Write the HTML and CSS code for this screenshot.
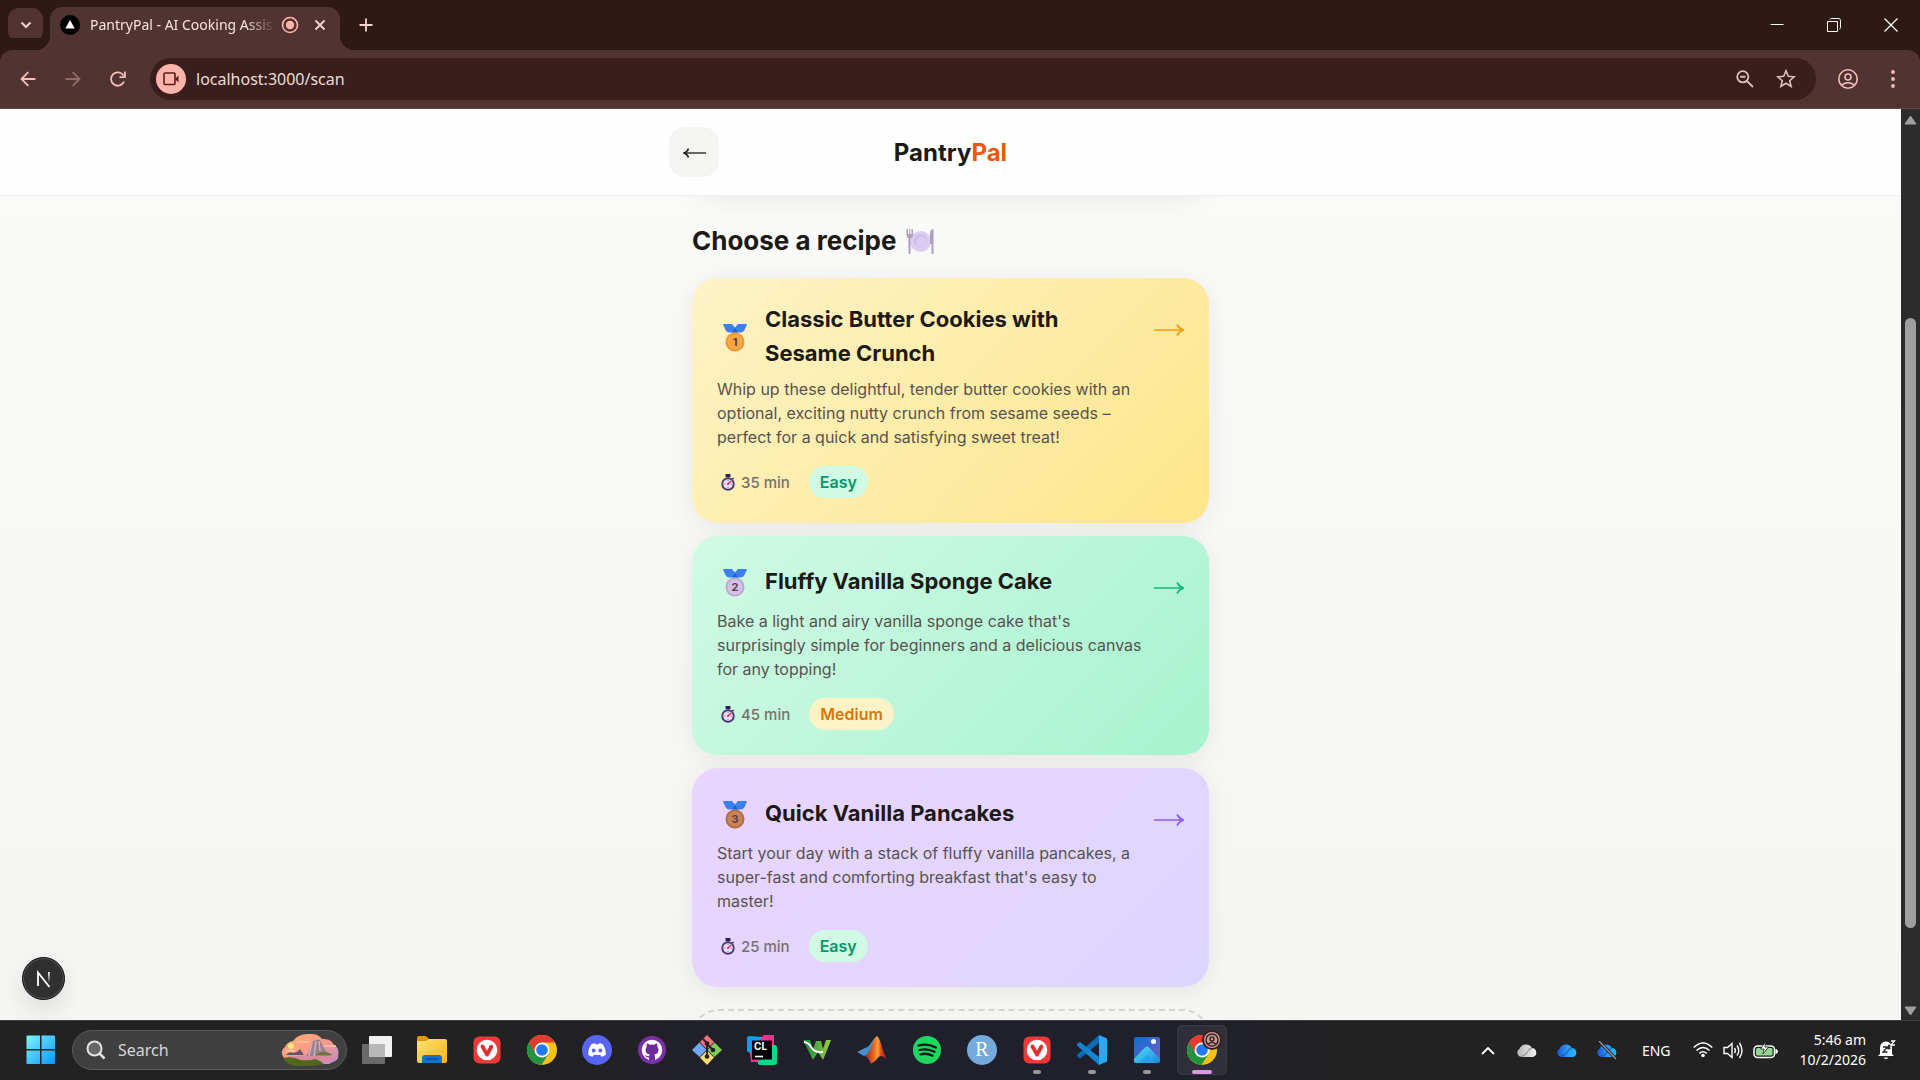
FILE: index.html
```html
<!DOCTYPE html>
<html lang="en">
<head>
    <meta charset="UTF-8">
    <meta name="viewport" content="width=device-width, initial-scale=1.0">
    <title>PantryPal - AI Cooking Assistant</title>
    <link rel="stylesheet" href="styles.css">
</head>
<body>

<!-- Shared icons -->
<svg class="sprite" aria-hidden="true">
    <defs>
        <linearGradient id="win-grad" x1="0" y1="0" x2="1" y2="1"><stop offset="0" stop-color="#7df3fb"/><stop offset="1" stop-color="#0a98ff"/></linearGradient>
        <linearGradient id="folder-grad" x1="0" y1="0" x2="1" y2="1"><stop offset="0" stop-color="#ffe27a"/><stop offset="1" stop-color="#f8b50c"/></linearGradient>
        <linearGradient id="sky-grad" x1="0" y1="0" x2="1" y2="1"><stop offset="0" stop-color="#ffb168"/><stop offset=".5" stop-color="#f99a8c"/><stop offset="1" stop-color="#b78fcb"/></linearGradient>
        <linearGradient id="photo-grad" x1="0" y1="0" x2="1" y2="1"><stop offset="0" stop-color="#0c6fd0"/><stop offset="1" stop-color="#7a5cc0"/></linearGradient>
        <linearGradient id="hill-grad" x1="0" y1="0" x2="1" y2="1"><stop offset="0" stop-color="#5ee0fa"/><stop offset="1" stop-color="#1389e0"/></linearGradient>
        <linearGradient id="cloud-blue" x1="0" y1="0" x2="1" y2="0"><stop offset="0" stop-color="#1457d6"/><stop offset=".5" stop-color="#2f93f5"/><stop offset="1" stop-color="#18c2ff"/></linearGradient>
        <linearGradient id="cloud-grey" x1="0" y1="0" x2="1" y2="0"><stop offset="0" stop-color="#b5b5b5"/><stop offset="1" stop-color="#f2f2f2"/></linearGradient>
        <linearGradient id="matlab-grad" x1="0" y1="0" x2="1" y2="0"><stop offset="0" stop-color="#9c2a16"/><stop offset=".4" stop-color="#e8641f"/><stop offset=".6" stop-color="#fba13a"/><stop offset=".75" stop-color="#d9431d"/><stop offset="1" stop-color="#a82817"/></linearGradient>
        <linearGradient id="w-grad" x1="0" y1="0" x2="1" y2="0"><stop offset="0" stop-color="#11873f"/><stop offset="1" stop-color="#9cd03c"/></linearGradient>
        <linearGradient id="n-grad" x1="0" y1="0" x2="0" y2="1"><stop offset="0" stop-color="#fff"/><stop offset="1" stop-color="#fff" stop-opacity="0"/></linearGradient>
    </defs>
    <symbol id="icon-chrome" viewBox="0 0 30 30">
        <circle cx="15" cy="15" r="15" fill="#fbc116"/>
        <path d="M15 15 L2 7.500 A15 15 0 0 0 14.500 30 L21.500 18.800Z" fill="#229342"/>
        <path d="M15 15 L8.500 18.800 L2 7.500 A15 15 0 0 1 28 7.500 L15 7.500Z" fill="#e33b2e"/>
        <circle cx="15" cy="15" r="7.500" fill="#fff"/>
        <circle cx="15" cy="15" r="5.800" fill="#2779f2"/>
    </symbol>
    <symbol id="icon-vivaldi" viewBox="0 0 28 28">
        <rect x=".5" y=".5" width="27" height="27" rx="6" fill="#ef3939"/>
        <circle cx="14" cy="14" r="10.300" fill="#fff"/>
        <path d="M9.500 10.500 L14 18.500 L18 11.500" fill="none" stroke="#e03030" stroke-width="3.800" stroke-linecap="round" stroke-linejoin="round"/>
        <circle cx="18.300" cy="10.800" r="2" fill="#e03030"/>
    </symbol>
    <symbol id="icon-timer" viewBox="0 0 14 17">
        <rect x="4.500" y="0" width="5" height="3" rx=".5" fill="#2e2359"/>
        <path d="M7 2v3M11.500 4l1 1" stroke="#2e2359" stroke-width="1.500"/>
        <circle cx="7" cy="10" r="5.800" fill="#e6dcf3" stroke="#493a70" stroke-width="1.900"/>
        <path d="M3.500 10h.8M9.700 10h.8M7 13v.8M7 6.300v.7" stroke="#6c5a90" stroke-width="1"/>
        <path d="M7 10l3-3" stroke="#e0265c" stroke-width="1.400"/>
        <circle cx="7" cy="10" r="1" fill="#e0265c"/>
    </symbol>
    <symbol id="icon-arrow" viewBox="0 0 32 14">
        <path d="M2 7h28" stroke="currentColor" stroke-width="1.500"/>
        <path d="M25 1.500Q27 5.500 31.500 7Q27 8.500 25 12.500" fill="none" stroke="currentColor" stroke-width="1.700"/>
    </symbol>
    <symbol id="icon-ribbon" viewBox="0 0 24 28">
        <path d="M0 .5Q0 0 1 0H9L12 3.500L15 0H23Q24 0 24 .5L21.500 6Q20.500 8 18 8.500H6Q3.500 8 2.500 6Z" fill="#3c80ee"/>
        <path d="M9 8.500L12 4l3 4.500Z" fill="#2563c9"/>
    </symbol>
    <symbol id="icon-cloud" viewBox="0 0 21 15">
        <path d="M4.500 14A4.500 4.500 0 0 1 2.500 5.700A7 7 0 0 1 15 5A4.600 4.600 0 0 1 16 14Z"/>
        <path d="M4.500 13.500Q9 12 11 8Q12.500 5 15.500 5" fill="none" stroke="#000" stroke-opacity=".25" stroke-width="1.500"/>
    </symbol>
</svg>

<div class="tab-strip">
    <button class="tab-search" aria-label="Search tabs">
        <svg width="12" height="8" viewBox="0 0 12 8"><path d="M1.500 1.500L6 6L10.500 1.500" fill="none" stroke="currentColor" stroke-width="2"/></svg>
    </button>
    <div class="tab">
        <svg width="20" height="20" viewBox="0 0 20 20"><circle cx="10" cy="10" r="10"/><path d="M10 5L14.700 13.500H5.300Z" fill="#fff"/></svg>
        <span class="tab-title">PantryPal - AI Cooking Assis</span>
        <svg class="recording" width="18" height="18" viewBox="0 0 18 18"><circle cx="9" cy="9" r="7.500" fill="none" stroke="currentColor" stroke-width="1.600"/><circle cx="9" cy="9" r="4.200" fill="currentColor"/></svg>
        <button class="icon-button" aria-label="Close tab">
            <svg width="12" height="12" viewBox="0 0 12 12"><path d="M1.500 1.500l9 9M10.500 1.500l-9 9" stroke="currentColor" stroke-width="1.800"/></svg>
        </button>
    </div>
    <button class="icon-button new-tab" aria-label="New tab">
        <svg width="14" height="14" viewBox="0 0 14 14"><path d="M7 .5v13M.5 7h13" stroke="currentColor" stroke-width="1.800"/></svg>
    </button>
    <div class="window-controls">
        <button class="icon-button" aria-label="Minimize"><svg width="14" height="14" viewBox="0 0 14 14"><path d="M.5 6.500h13" stroke="currentColor"/></svg></button>
        <button class="icon-button" aria-label="Restore"><svg width="14" height="14" viewBox="0 0 14 14"><path d="M.5 3.500h10v10H.5zM3 1.500q.4-1 1.500-1h7q2 0 2 2v7q0 1.100-1 1.500" fill="none" stroke="currentColor"/></svg></button>
        <button class="icon-button" aria-label="Close"><svg width="14" height="14" viewBox="0 0 14 14"><path d="M.5.5l13 13M13.500.5l-13 13" stroke="currentColor" stroke-width="1.200"/></svg></button>
    </div>
</div>

<div class="toolbar">
    <div class="nav-buttons">
        <button class="icon-button" aria-label="Back"><svg width="16" height="16" viewBox="0 0 16 16"><path d="M15.500 8H2M8.300 1.200L1.500 8l6.800 6.800" fill="none" stroke="currentColor" stroke-width="1.800"/></svg></button>
        <button class="icon-button dim" aria-label="Forward"><svg width="16" height="16" viewBox="0 0 16 16"><path d="M.5 8H14M7.700 1.200L14.500 8l-6.800 6.800" fill="none" stroke="currentColor" stroke-width="1.800"/></svg></button>
        <button class="icon-button" aria-label="Reload"><svg width="16" height="16" viewBox="0 0 16 16"><path d="M14 10.500A6.700 6.700 0 1 1 13.500 4.500" fill="none" stroke="currentColor" stroke-width="1.800"/><path d="M9.500 6.200h5.400V.5" fill="none" stroke="currentColor" stroke-width="1.800"/></svg></button>
    </div>
    <div class="omnibox">
        <button class="camera" aria-label="Camera in use">
            <svg width="16" height="14" viewBox="0 0 16 14"><rect x="1" y="1" width="11" height="11.500" rx="1" fill="none" stroke="currentColor" stroke-width="1.600"/><path d="M12 7l3.500-3.500v7Z" fill="currentColor"/></svg>
        </button>
        <input class="address" type="text" value="localhost:3000/scan" aria-label="Address">
        <button class="icon-button" aria-label="Zoom"><svg width="18" height="18" viewBox="0 0 18 18"><circle cx="6.800" cy="6.800" r="5.600" fill="none" stroke="currentColor" stroke-width="1.800"/><path d="M10.800 10.800l6.200 6.200M4.200 6.800h5.200" stroke="currentColor" stroke-width="1.900"/></svg></button>
        <button class="icon-button" aria-label="Bookmark"><svg width="20" height="19" viewBox="0 0 20 19"><path d="M10 1.800l2.300 5.500 5.900.5-4.500 3.900 1.400 5.700L10 14.300l-5.100 3.100 1.400-5.700-4.500-3.900 5.900-.5Z" fill="none" stroke="currentColor" stroke-width="1.600"/></svg></button>
    </div>
    <button class="icon-button profile" aria-label="Profile"><svg width="20" height="20" viewBox="0 0 20 20"><g fill="none" stroke="currentColor" stroke-width="1.600"><circle cx="10" cy="10" r="9.200"/><circle cx="10" cy="8" r="3"/><path d="M3.700 16q6.300-4.500 12.600 0"/></g></svg></button>
    <button class="icon-button menu" aria-label="Menu"><svg width="4" height="18" viewBox="0 0 4 18"><g fill="currentColor"><circle cx="2" cy="2" r="1.900"/><circle cx="2" cy="9" r="1.900"/><circle cx="2" cy="16" r="1.900"/></g></svg></button>
</div>

<div class="viewport">
    <div class="page">
        <header class="page-header">
            <div class="header-inner">
                <button class="back-button" aria-label="Go back">
                    <svg width="23" height="14" viewBox="0 0 23 14"><path d="M23 8H2" stroke="currentColor" stroke-width="1.300"/><path d="M5.500 3.500Q4.500 6.800 1 8Q4.500 9.200 5.500 12.500" fill="none" stroke="currentColor" stroke-width="1.500"/></svg>
                </button>
                <div class="brand">Pantry<span>Pal</span></div>
            </div>
        </header>
        <main class="content">
            <div class="scan-card"></div>
            <h1>Choose a recipe
                <svg width="28" height="25" viewBox="0 0 28 25"><circle cx="14.500" cy="12.500" r="10.500" fill="#dccff4"/><circle cx="14.500" cy="12" r="6.800" fill="#cdbdea"/><circle cx="15" cy="13" r="5.500" fill="#d9ccf3"/><path d="M.5 0v6q0 3 2 3.500V24q0 1 1 1t1-1V9.500q2.500-.5 2.500-3.500V0H5.500v5H4.300V0H3.200v5H2V0Z" fill="#aba1bd"/><path d="M27.500 25h-2V15h-1.500V5q0-5 3.500-5Z" fill="#aba1bd"/></svg>
            </h1>
            <div class="recipes">
                <a class="recipe-card gold" href="#">
                    <div class="recipe-body">
                        <div class="recipe-title">
                            <svg class="medal" viewBox="0 0 24 28"><use href="#icon-ribbon"/><circle cx="12" cy="18" r="9.500" fill="#ee9440"/><circle cx="12" cy="18" r="7.700" fill="#faa83f"/><text x="12" y="22">1</text></svg>
                            <h2>Classic Butter Cookies with Sesame Crunch</h2>
                        </div>
                        <p>Whip up these delightful, tender butter cookies with an optional, exciting nutty crunch from sesame seeds – perfect for a quick and satisfying sweet treat!</p>
                        <div class="recipe-meta">
                            <svg class="timer"><use href="#icon-timer"/></svg>
                            <span class="time">35 min</span>
                            <span class="badge easy">Easy</span>
                        </div>
                    </div>
                    <svg class="arrow"><use href="#icon-arrow"/></svg>
                </a>
                <a class="recipe-card silver" href="#">
                    <div class="recipe-body">
                        <div class="recipe-title">
                            <svg class="medal" viewBox="0 0 24 28"><use href="#icon-ribbon"/><circle cx="12" cy="18" r="9.500" fill="#bda6d3"/><circle cx="12" cy="18" r="7.700" fill="#d3c2e4"/><text x="12" y="22">2</text></svg>
                            <h2>Fluffy Vanilla Sponge Cake</h2>
                        </div>
                        <p>Bake a light and airy vanilla sponge cake that's surprisingly simple for beginners and a delicious canvas for any topping!</p>
                        <div class="recipe-meta">
                            <svg class="timer"><use href="#icon-timer"/></svg>
                            <span class="time">45 min</span>
                            <span class="badge medium">Medium</span>
                        </div>
                    </div>
                    <svg class="arrow"><use href="#icon-arrow"/></svg>
                </a>
                <a class="recipe-card bronze" href="#">
                    <div class="recipe-body">
                        <div class="recipe-title">
                            <svg class="medal" viewBox="0 0 24 28"><use href="#icon-ribbon"/><circle cx="12" cy="18" r="9.500" fill="#b06a44"/><circle cx="12" cy="18" r="7.700" fill="#c98354"/><text x="12" y="22">3</text></svg>
                            <h2>Quick Vanilla Pancakes</h2>
                        </div>
                        <p>Start your day with a stack of fluffy vanilla pancakes, a super-fast and comforting breakfast that's easy to master!</p>
                        <div class="recipe-meta">
                            <svg class="timer"><use href="#icon-timer"/></svg>
                            <span class="time">25 min</span>
                            <span class="badge easy">Easy</span>
                        </div>
                    </div>
                    <svg class="arrow"><use href="#icon-arrow"/></svg>
                </a>
            </div>
            <div class="more-card"></div>
        </main>
        <button class="dev-button" aria-label="Open dev tools">
            <svg width="16" height="18" viewBox="0 0 16 18"><path d="M2 16V2.500L13.500 17" fill="none" stroke="#fff" stroke-width="1.800"/><rect x="12" y="2" width="1.800" height="11" fill="url(#n-grad)"/></svg>
        </button>
    </div>
    <div class="scrollbar">
        <svg width="13" height="10" viewBox="0 0 13 10"><path d="M6.500 1L12 9H1Z" fill="#9f9f9f" stroke="#9f9f9f" stroke-linejoin="round"/></svg>
        <div class="track"><div class="thumb"></div></div>
        <svg width="13" height="10" viewBox="0 0 13 10"><path d="M6.500 9L12 1H1Z" fill="#9f9f9f" stroke="#9f9f9f" stroke-linejoin="round"/></svg>
    </div>
</div>

<footer class="taskbar">
    <div class="taskbar-apps">
        <button class="start" aria-label="Start"><svg width="30" height="30" viewBox="0 0 30 30"><path d="M1.500.5H14V14H.5V1.500q0-1 1-1zM15.500.5H28q1 0 1 1V14H15.500zM.5 15.500H14V29H1.500q-1 0-1-1zM15.500 15.500H29V28q0 1-1 1H15.500z" fill="url(#win-grad)"/></svg></button>
        <div class="search">
            <svg width="20" height="20" viewBox="0 0 20 20"><circle cx="8.500" cy="8.500" r="7" fill="#666" stroke="#e4e4e4" stroke-width="2"/><path d="M13.500 13.500l5 5" stroke="#e4e4e4" stroke-width="2.500"/></svg>
            <input type="text" placeholder="Search" aria-label="Search">
            <svg width="58" height="32" viewBox="0 0 58 32"><path d="M3 24Q-2 17 4 13Q6 8 12 7Q17 0 27 0Q36-1 41 5Q50 4 53 11Q59 14 57 22Q58 26 52 28L48 30H12Q6 29 3 24Z" fill="url(#sky-grad)"/><circle cx="10" cy="12" r="3" fill="#ffe27d"/><path d="M16 8h12M5 17h9M43 12h12" stroke="#ffc99c" stroke-width="1.500"/><path d="M25 22Q30 15 31 8Q35 5 39 6Q41 12 45 17L51 22Z" fill="#9a7f93"/><path d="M31 8l-3 14M35 7l-2 15M38 7l1 10" stroke="#cfb0b2" stroke-width="1.500"/><path d="M5 21q3-4 7-2l4-1 3-3 4 6Z" fill="#665363"/><path d="M34 21q8-6 18 0Z" fill="#667a2e"/><path d="M5 22h48v3q-5 3-23 3Z" fill="#d88aa1"/><path d="M2 24q10-2 18 2 9 1 14-1 5 1 9 5-10 2-26 2-11 0-15-8Z" fill="#52661d"/></svg>
        </div>
        <button class="app" aria-label="Task view"><svg width="30" height="28" viewBox="0 0 30 28"><rect x="7" y="0" width="23" height="21" rx="1" fill="#f1f1f1"/><rect x="0" y="8" width="23" height="20" rx="1" fill="#777" fill-opacity=".85"/><path d="M7 8h16v13H7z" fill="#b8b8b8"/></svg></button>
        <button class="app" aria-label="File Explorer"><svg width="30" height="28" viewBox="0 0 30 28"><path d="M0 2q0-2 2-2h7l3 3h0v8H0Z" fill="#dd9806"/><path d="M0 5h9l3-2h16q2 0 2 2v20q0 2-2 2H2q-2 0-2-2Z" fill="url(#folder-grad)"/><path d="M5 27v-5q0-3 3-3h14q3 0 3 3v5Z" fill="#0e74cf"/><path d="M9 23h12" stroke="#084b8a" stroke-width="1.500"/></svg></button>
        <button class="app" aria-label="Vivaldi"><svg width="28" height="28"><use href="#icon-vivaldi"/></svg></button>
        <button class="app" aria-label="Chrome"><svg width="30" height="30"><use href="#icon-chrome"/></svg></button>
        <button class="app" aria-label="Discord"><svg width="30" height="30" viewBox="0 0 30 30"><circle cx="15" cy="15" r="15" fill="#5865f2"/><path d="M9 9.500q2-1.200 4-1.300l.6 1.100h2.800l.6-1.100q2 .1 4 1.300 3 4.500 3 10-2 1.800-4.500 2.200l-1.300-2q-3.200.8-6.400 0l-1.300 2Q8 21.300 6 19.500q0-5.500 3-10Z" fill="#fff"/><circle cx="11.700" cy="15.500" r="1.900" fill="#5865f2"/><circle cx="18.300" cy="15.500" r="1.900" fill="#5865f2"/></svg></button>
        <button class="app" aria-label="GitHub"><svg width="28" height="28" viewBox="0 0 28 28"><circle cx="14" cy="14" r="14" fill="#7b2fa5"/><circle cx="14" cy="14" r="10.300" fill="#fff"/><path d="M11 24.500v-3q-3 .5-4-2l1-.3q1 1.500 3 1 0-1 .8-1.600Q7.500 18 7.500 13.700q0-1.700 1.200-3-.4-1.500.2-3.200 1.500 0 3 1.200 2-.5 4.200 0 1.500-1.200 3-1.200.6 1.700.2 3.200 1.200 1.300 1.200 3 0 4.300-4.300 4.900.8.800.8 2.400v3.500Z" fill="#6f2a99"/></svg></button>
        <button class="app" aria-label="Git"><svg width="30" height="30" viewBox="0 0 30 30"><path d="M15 0l7 7-7 7.500L8 7Z" fill="#f7707a"/><path d="M7.500 7.500l7 7.500-7 7L0 15Z" fill="#6fa8f5"/><path d="M22.500 7.500L30 15l-7.500 7-7-7Z" fill="#7fcb5c"/><path d="M15 15.500l7 7-7 7.500-7-7.500Z" fill="#fbdb71"/><path d="M11 4l4 4v13M15 9l6 6" stroke="#222" stroke-width="1.800" fill="none"/><circle cx="15" cy="8.500" r="2.300" fill="#222"/><circle cx="21" cy="15" r="2.300" fill="#222"/><circle cx="15" cy="21.500" r="2.300" fill="#222"/></svg></button>
        <button class="app" aria-label="CLion"><svg width="30" height="30" viewBox="0 0 30 30"><path d="M0 3q0-2 3-2l13 1v12L4 19 0 16Z" fill="#0aa0ec"/><path d="M14 3L17 0h10v12L10 27H4l-1-9 9-9Z" fill="#fc318c"/><path d="M23 10h5q2 0 2 3v14q0 3-3 3H12l-2-4 13-4Z" fill="#0bd889"/><path d="M5 5.500h20v19H5z"/><text class="cl" x="7" y="15">CL</text><path d="M8 21.500h8" stroke="#fff" stroke-width="1.600"/></svg></button>
        <button class="app" aria-label="Webots"><svg width="28" height="22" viewBox="0 0 28 22"><path d="M0 1h7l3 9 3-8h5l2 8 3-9h5l-8 20-5-8-5 8Z" fill="url(#w-grad)"/><path d="M1 3q5 1 7 5 4 6 12 5" stroke="#fff" stroke-width="2" fill="none"/></svg></button>
        <button class="app" aria-label="MATLAB"><svg width="30" height="28" viewBox="0 0 30 28"><path d="M0 16L8 12Q12 11 14 7Q17 2 20 0L14 17L7 20Z" fill="#4093cf"/><path d="M8 20Q12 17 14.500 10Q17 2 20 0Q22 1 24.500 9Q26.500 17 29.500 23Q25 18.500 21.500 21Q17 27 13.500 27.500Q12.500 22 8 20Z" fill="url(#matlab-grad)"/></svg></button>
        <button class="app" aria-label="Spotify"><svg width="28" height="28" viewBox="0 0 28 28"><circle cx="14" cy="14" r="14" fill="#1ed760"/><path d="M5.500 9.500q9-2.500 17.500 2M6.500 14q8-2 15 1.800M7.500 18.300q6.500-1.600 12 1.500" stroke="#151a17" stroke-width="2.300" stroke-linecap="round" fill="none"/></svg></button>
        <button class="app" aria-label="RStudio"><svg width="30" height="30" viewBox="0 0 30 30"><circle cx="15" cy="15" r="15" fill="#75aadb"/><text class="r-letter" x="15" y="21">R</text></svg></button>
        <button class="app running" aria-label="Vivaldi window"><svg width="28" height="28"><use href="#icon-vivaldi"/></svg></button>
        <button class="app running" aria-label="Visual Studio Code"><svg width="30" height="30" viewBox="0 0 30 30"><path d="M22 0L30 3.500v23L22 30Z" fill="#2aa8f2"/><path d="M22 0v8L3 23.500 0 21v-1Z" fill="#0a6cb5"/><path d="M22 30v-8L3 7 0 9v1.500Z" fill="#1484d0"/></svg></button>
        <button class="app running" aria-label="Photos"><svg width="26" height="26" viewBox="0 0 26 26"><rect width="26" height="26" rx="2" fill="url(#photo-grad)"/><path d="M0 22L11 10.500q2-2 4 0L26 22v2q0 2-2 2H2q-2 0-2-2Z" fill="url(#hill-grad)"/><path d="M5 26l8-8 8 8Z" fill="#2a9ef0"/><circle cx="19.500" cy="4.500" r="2.500" fill="#fff"/></svg></button>
        <button class="app running active" aria-label="Chrome window">
            <svg width="30" height="30"><use href="#icon-chrome"/></svg>
            <svg class="app-badge" width="20" height="20" viewBox="0 0 20 20"><circle cx="10" cy="10" r="10" fill="#3b211e"/><circle cx="10" cy="10" r="8" fill="#c9a19b"/><g fill="none" stroke="#3b211e" stroke-width="1.500"><circle cx="10" cy="10" r="6"/><circle cx="10" cy="9" r="2"/><path d="M6 14q4-3 8 0"/></g></svg>
        </button>
    </div>
    <div class="tray">
        <button class="tray-button" aria-label="Show hidden icons"><svg width="14" height="9" viewBox="0 0 14 9"><path d="M1 8l6-6 6 6" fill="none" stroke="#fff" stroke-width="1.800"/></svg></button>
        <button class="tray-button" aria-label="Cloud"><svg width="21" height="15" fill="url(#cloud-grey)"><use href="#icon-cloud"/></svg></button>
        <button class="tray-button" aria-label="OneDrive"><svg width="21" height="15" fill="url(#cloud-blue)"><use href="#icon-cloud"/></svg></button>
        <button class="tray-button" aria-label="OneDrive paused"><svg width="21" height="19" viewBox="0 0 21 19"><g fill="url(#cloud-blue)"><use href="#icon-cloud" y="2" width="21" height="15"/></g><path d="M2 0l17 18" stroke="#222" stroke-width="3"/><path d="M2 0l17 18" stroke="#999" stroke-width="1.300"/></svg></button>
        <button class="language">ENG</button>
        <button class="status" aria-label="Network, volume, battery">
            <svg width="20" height="16" viewBox="0 0 20 16"><g fill="none" stroke="#fff" stroke-width="1.500"><path d="M.7 5.500Q10-3.500 19.300 5.500M3.500 8.500Q10 2.500 16.500 8.500M6.300 11.400Q10 8 13.700 11.400"/></g><circle cx="10" cy="13.500" r="1.800" fill="#fff"/></svg>
            <svg width="20" height="17" viewBox="0 0 20 17"><g fill="none" stroke="#fff" stroke-width="1.400"><path d="M1 5.500h3.500L9 1.500v14l-4.500-4H1Z"/><path d="M11.500 6q1.700 2.500 0 5M14 3.500q3.500 5 0 10M16.500 1q5 7.500 0 15"/></g></svg>
            <svg width="25" height="17" viewBox="0 0 25 17"><rect x="1" y="4" width="20.500" height="11.500" rx="3.500" fill="none" stroke="#fff" stroke-width="1.500"/><rect x="3" y="6" width="16.500" height="7.500" rx="1.500" fill="#92d58f"/><path d="M22.500 7.500q2 0 2 2t-2 2" fill="#fff" stroke="#fff"/><path d="M12.500 0L7.500 7h3.500l-1 5 5.500-7h-3.500Z" fill="#fff" stroke="#222" stroke-width=".8"/></svg>
        </button>
        <div class="clock"><time>5:46 am</time><time>10/2/2026</time></div>
        <button class="bell" aria-label="Notifications"><svg width="18" height="20" viewBox="0 0 18 20"><path d="M2 14V8q0-6 6-6.500Q14 2 14 8v6l2 2H0ZM5.500 17.500h5q-2.500 3-5 0Z" fill="#fff"/><path d="M5 7h4.500L5 12h4.500M10 5.500h2.500L10 8.500h2.500" fill="none" stroke="#222" stroke-width="1.300"/><path d="M13 1h3.500L13 5h4" fill="none" stroke="#fff" stroke-width="1.300"/></svg></button>
    </div>
</footer>

</body>
</html>
```
FILE: styles.css
```css
* {
    box-sizing: border-box;
}

body {
    display: flex;
    flex-direction: column;
    height: 100vh;
    margin: 0;
    overflow: hidden;
    font-family: 'Noto Sans', sans-serif;
}

button, input {
    font: inherit;
    color: inherit;
    border: none;
    background: none;
    padding: 0;
}

button {
    cursor: pointer;
}

svg {
    display: block;
    flex: none;
}

.sprite {
    position: absolute;
    width: 0;
    height: 0;
}

/* Browser tabs */
.tab-strip {
    display: flex;
    align-items: center;
    height: 50px;
    flex: none;
    padding-left: 8px;
    background-color: #2f1915;
    color: #f5d5d0;
}

.tab-search {
    display: grid;
    place-items: center;
    width: 35px;
    height: 34px;
    border-radius: 11px;
    background-color: #513331;
}

.tab {
    position: relative;
    display: flex;
    align-items: center;
    align-self: flex-end;
    width: 290px;
    height: 43px;
    margin-left: 7px;
    padding: 0 14px 8px 10px;
    border-radius: 12px 12px 0 0;
    background-color: #513331;
}

/* Curved feet of the active tab */
.tab::before, .tab::after {
    content: "";
    position: absolute;
    bottom: 0;
    width: 14px;
    height: 14px;
}

.tab::before {
    right: 100%;
    background: radial-gradient(circle at 0 0, transparent 14px, #513331 14px);
}

.tab::after {
    left: 100%;
    background: radial-gradient(circle at 100% 0, transparent 14px, #513331 14px);
}

.tab-title {
    flex: 1;
    min-width: 0;
    margin: 0 5px 0 10px;
    white-space: nowrap;
    font-size: 14px;
    color: #f6e4e1;
    -webkit-mask-image: linear-gradient(to right, #000 84%, transparent);
    mask-image: linear-gradient(to right, #000 84%, transparent);
}

.recording {
    margin-right: 15px;
    color: #ffb4ab;
}

.icon-button {
    display: grid;
    place-items: center;
}

.new-tab {
    margin-left: 19px;
}

.window-controls {
    display: flex;
    margin-left: auto;
    padding-right: 1px;
    color: #fff;
}

.window-controls .icon-button {
    width: 57px;
    height: 48px;
}

/* Browser toolbar */
.toolbar {
    display: flex;
    align-items: center;
    height: 59px;
    flex: none;
    padding: 0 25px 1px 20px;
    border-bottom: 1px solid #644744;
    border-radius: 12px 12px 0 0;
    background-color: #513331;
    box-shadow: 0 -12px 0 #2f1915;
    color: #f4c0b9;
}

.nav-buttons {
    display: flex;
    gap: 29px;
    margin-right: 24px;
}

.dim {
    opacity: 0.4;
}

.omnibox {
    display: flex;
    align-items: center;
    flex: 1;
    gap: 22px;
    height: 42px;
    padding: 0 20px 0 6px;
    border-radius: 21px;
    background-color: #391e1b;
    color: #dbc1bd;
}

.camera {
    display: grid;
    place-items: center;
    width: 30px;
    height: 30px;
    border-radius: 50%;
    background-color: #ffb4ab;
    color: #561e19;
}

.address {
    flex: 1;
    margin-left: -12px;
    font-size: 16px;
    color: #eadedc;
}

.profile {
    margin: 0 33px 0 22px;
}

/* Page area */
.viewport {
    display: flex;
    flex: 1;
    min-height: 0;
}

.page {
    position: relative;
    flex: 1;
    overflow: hidden;
    background: linear-gradient(#fafaf9, #f5f5f3);
    font-family: 'Inter', sans-serif;
    color: #1c1917;
}

.page-header {
    position: relative;
    z-index: 1;
    background-color: #fefefe;
    border-bottom: 1px solid #efefee;
}

.header-inner {
    display: grid;
    grid-template-columns: 50px 1fr 50px;
    align-items: center;
    max-width: 563px;
    margin: 0 auto;
    padding: 18px 0;
}

.back-button {
    display: grid;
    place-items: center;
    height: 50px;
    border-radius: 16px;
    background-color: #f5f5f4;
}

.brand {
    text-align: center;
    font-size: 24px;
    font-weight: 700;
}

.brand span {
    color: #ea580c;
}

.content {
    max-width: 517px;
    margin: 0 auto;
}

.scan-card, .recipe-card {
    border-radius: 26px;
    box-shadow: 0 4px 26px rgba(0, 0, 0, 0.07);
}

/* Bottom of the scan card, scrolled under the header */
.scan-card {
    height: 84px;
    margin-top: -86px;
}

h1 {
    display: flex;
    align-items: center;
    gap: 10px;
    margin: 30px 0 20px;
    line-height: 34px;
    font-size: 26px;
    font-weight: 700;
}

h2 {
    margin: 0;
    line-height: 34px;
    font-size: 22px;
    font-weight: 700;
}

.recipes {
    display: flex;
    flex-direction: column;
    gap: 13px;
}

.recipe-card {
    display: flex;
    justify-content: space-between;
    padding: 24px 25px 25px;
    color: inherit;
    text-decoration: none;
}

.gold {
    background: linear-gradient(135deg, #fef3c7, #fde68a);
}

.silver {
    background: linear-gradient(135deg, #d1fae5, #a7f3d0);
}

.bronze {
    background: linear-gradient(135deg, #e9d5ff, #ddd6fe);
}

.recipe-body {
    flex: 1;
    max-width: 430px;
}

.recipe-title {
    display: flex;
    align-items: center;
    gap: 18px;
    min-height: 42px;
    padding-left: 6px;
}

.medal {
    width: 24px;
    height: 28px;
    margin-top: 3px;
}

.medal text {
    font: 700 11px 'Inter', sans-serif;
    text-anchor: middle;
    fill: #63364f;
}

.recipe-card p {
    margin: 7px 0 17px;
    line-height: 24px;
    font-size: 16px;
    color: #57534e;
}

.recipe-meta {
    display: flex;
    align-items: center;
    height: 32px;
    padding-left: 4px;
    color: #78716c;
}

.timer {
    width: 14px;
    height: 17px;
    margin-right: 6px;
}

.time {
    font-size: 15px;
    font-weight: 500;
}

.badge {
    margin-left: 19px;
    padding: 0 11px;
    line-height: 32px;
    border-radius: 16px;
    font-size: 16px;
    font-weight: 600;
}

.easy {
    background-color: #d1fae5;
    color: #059669;
}

.medium {
    background-color: #fef3c7;
    color: #d97706;
}

.arrow {
    width: 32px;
    height: 14px;
    margin-top: 21px;
}

.gold .arrow {
    color: #f59e0b;
}

.silver .arrow {
    color: #10b981;
}

.bronze .arrow {
    color: #8b5cf6;
}

.more-card {
    height: 80px;
    margin-top: 22px;
    border: 2px dashed #d6d3d1;
    border-radius: 26px;
}

/* Floating over the page */
.dev-button {
    position: absolute;
    left: 22px;
    bottom: 20px;
    display: grid;
    place-items: center;
    width: 43px;
    height: 43px;
    border: 1px solid #111;
    border-radius: 50%;
    background-color: #303030;
    box-shadow: inset 0 0 0 1px #555, 0 10px 24px rgba(0, 0, 0, 0.1);
}

.scrollbar {
    display: flex;
    flex-direction: column;
    align-items: center;
    width: 19px;
    padding: 6px 0 4px;
    background-color: #2c2c2c;
}

.track {
    flex: 1;
    padding: 193px 0 78px;
}

.thumb {
    width: 11px;
    height: 100%;
    border-radius: 6px;
    background-color: #9f9f9f;
}

/* Taskbar */
.taskbar {
    display: flex;
    justify-content: space-between;
    height: 60px;
    flex: none;
    padding-bottom: 1px;
    border-top: 1px solid #3d3d42;
    background: linear-gradient(to right, #222223 25%, #1f202c 45%, #1f202c 60%, #222223 70%);
    color: #fff;
}

.taskbar-apps, .tray {
    display: flex;
    align-items: center;
}

.start {
    margin: 0 16px 0 26px;
}

.search {
    display: flex;
    align-items: center;
    width: 275px;
    height: 40px;
    margin-right: 5px;
    padding: 0 7px 0 13px;
    border: 1px solid #5a595a;
    border-radius: 20px;
    background-color: #404041;
}

.search input {
    flex: 1;
    min-width: 0;
    margin-left: 12px;
    font-size: 16px;
}

.search input::placeholder {
    color: #d6d6d6;
}

.app {
    position: relative;
    display: grid;
    place-items: center;
    width: 50px;
    height: 50px;
    margin-right: 5px;
    border-radius: 5px;
}

.cl {
    font: 700 10px 'Inter', sans-serif;
    fill: #fff;
}

.r-letter {
    font: 20px 'Liberation Serif', serif;
    text-anchor: middle;
    fill: #fff;
}

.running::after {
    content: "";
    position: absolute;
    bottom: 1px;
    left: 21px;
    width: 8px;
    height: 4px;
    border-radius: 2px;
    background-color: #98989b;
}

.active {
    border: 1px solid #3a3a44;
    background-color: #30303a;
}

.active::after {
    bottom: 0;
    left: 14px;
    width: 20px;
    background-color: #d99ae2;
}

.app-badge {
    position: absolute;
    top: 4px;
    right: 4px;
}

.tray {
    font-size: 14px;
}

.tray-button {
    display: grid;
    place-items: center;
    width: 40px;
    height: 40px;
}

.language {
    margin-left: 14px;
}

.status {
    display: flex;
    align-items: center;
    gap: 10px;
    margin: 0 22px 0 22px;
}

.clock {
    display: flex;
    flex-direction: column;
    text-align: right;
    line-height: 20px;
}

.bell {
    margin: 0 24px 0 12px;
}
```
